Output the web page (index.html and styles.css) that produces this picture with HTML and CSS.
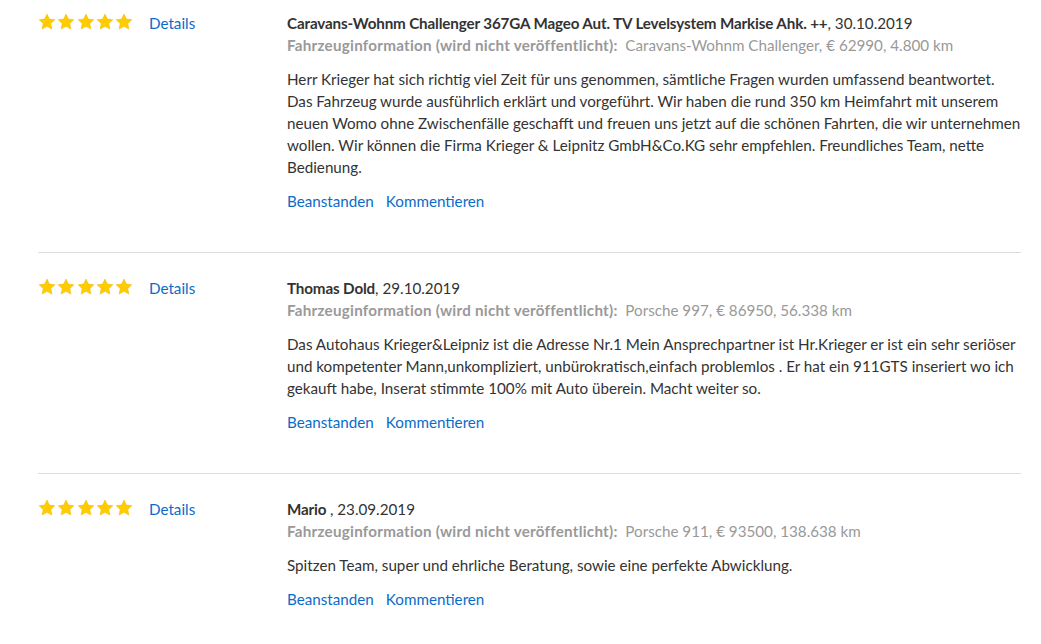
FILE: index.html
```html
<!DOCTYPE html>
<html lang="de">
<head>
    <meta charset="UTF-8">
    <title>Bewertungen</title>
    <link rel="stylesheet" href="styles.css">
</head>
<body>
    <div class="reviews">
        <div class="review">
            <div class="review-side">
                <div class="stars">
                    <svg viewBox="0 0 20 20"><path d="M10 1.2l2.6 5.6 6.1.7-4.5 4.2 1.2 6.1L10 14.8l-5.4 3 1.2-6.1L1.3 7.5l6.1-.7z"/></svg>
                    <svg viewBox="0 0 20 20"><path d="M10 1.2l2.6 5.6 6.1.7-4.5 4.2 1.2 6.1L10 14.8l-5.4 3 1.2-6.1L1.3 7.5l6.1-.7z"/></svg>
                    <svg viewBox="0 0 20 20"><path d="M10 1.2l2.6 5.6 6.1.7-4.5 4.2 1.2 6.1L10 14.8l-5.4 3 1.2-6.1L1.3 7.5l6.1-.7z"/></svg>
                    <svg viewBox="0 0 20 20"><path d="M10 1.2l2.6 5.6 6.1.7-4.5 4.2 1.2 6.1L10 14.8l-5.4 3 1.2-6.1L1.3 7.5l6.1-.7z"/></svg>
                    <svg viewBox="0 0 20 20"><path d="M10 1.2l2.6 5.6 6.1.7-4.5 4.2 1.2 6.1L10 14.8l-5.4 3 1.2-6.1L1.3 7.5l6.1-.7z"/></svg>
                </div>
                <a class="link" href="#">Details</a>
            </div>
            <div class="review-main">
                <div class="review-title"><strong>Caravans-Wohnm Challenger 367GA Mageo Aut. TV Levelsystem Markise Ahk. ++</strong>, 30.10.2019</div>
                <div class="review-info"><strong>Fahrzeuginformation (wird nicht veröffentlicht):</strong>&nbsp; Caravans-Wohnm Challenger, € 62990, 4.800 km</div>
                <p class="review-text">Herr Krieger hat sich richtig viel Zeit für uns genommen, sämtliche Fragen wurden umfassend beantwortet. Das Fahrzeug wurde ausführlich erklärt und vorgeführt. Wir haben die rund 350 km Heimfahrt mit unserem neuen Womo ohne Zwischenfälle geschafft und freuen uns jetzt auf die schönen Fahrten, die wir unternehmen wollen. Wir können die Firma Krieger &amp; Leipnitz GmbH&amp;Co.KG sehr empfehlen. Freundliches Team, nette Bedienung.</p>
                <div class="review-actions">
                    <a class="link" href="#">Beanstanden</a>
                    <a class="link" href="#">Kommentieren</a>
                </div>
            </div>
        </div>

        <div class="review">
            <div class="review-side">
                <div class="stars">
                    <svg viewBox="0 0 20 20"><path d="M10 1.2l2.6 5.6 6.1.7-4.5 4.2 1.2 6.1L10 14.8l-5.4 3 1.2-6.1L1.3 7.5l6.1-.7z"/></svg>
                    <svg viewBox="0 0 20 20"><path d="M10 1.2l2.6 5.6 6.1.7-4.5 4.2 1.2 6.1L10 14.8l-5.4 3 1.2-6.1L1.3 7.5l6.1-.7z"/></svg>
                    <svg viewBox="0 0 20 20"><path d="M10 1.2l2.6 5.6 6.1.7-4.5 4.2 1.2 6.1L10 14.8l-5.4 3 1.2-6.1L1.3 7.5l6.1-.7z"/></svg>
                    <svg viewBox="0 0 20 20"><path d="M10 1.2l2.6 5.6 6.1.7-4.5 4.2 1.2 6.1L10 14.8l-5.4 3 1.2-6.1L1.3 7.5l6.1-.7z"/></svg>
                    <svg viewBox="0 0 20 20"><path d="M10 1.2l2.6 5.6 6.1.7-4.5 4.2 1.2 6.1L10 14.8l-5.4 3 1.2-6.1L1.3 7.5l6.1-.7z"/></svg>
                </div>
                <a class="link" href="#">Details</a>
            </div>
            <div class="review-main">
                <div class="review-title"><strong>Thomas Dold</strong>, 29.10.2019</div>
                <div class="review-info"><strong>Fahrzeuginformation (wird nicht veröffentlicht):</strong>&nbsp; Porsche 997, € 86950, 56.338 km</div>
                <p class="review-text">Das Autohaus Krieger&amp;Leipniz ist die Adresse Nr.1 Mein Ansprechpartner ist Hr.Krieger er ist ein sehr seriöser und kompetenter Mann,unkompliziert, unbürokratisch,einfach problemlos . Er hat ein 911GTS inseriert wo ich gekauft habe, Inserat stimmte 100% mit Auto überein. Macht weiter so.</p>
                <div class="review-actions">
                    <a class="link" href="#">Beanstanden</a>
                    <a class="link" href="#">Kommentieren</a>
                </div>
            </div>
        </div>

        <div class="review">
            <div class="review-side">
                <div class="stars">
                    <svg viewBox="0 0 20 20"><path d="M10 1.2l2.6 5.6 6.1.7-4.5 4.2 1.2 6.1L10 14.8l-5.4 3 1.2-6.1L1.3 7.5l6.1-.7z"/></svg>
                    <svg viewBox="0 0 20 20"><path d="M10 1.2l2.6 5.6 6.1.7-4.5 4.2 1.2 6.1L10 14.8l-5.4 3 1.2-6.1L1.3 7.5l6.1-.7z"/></svg>
                    <svg viewBox="0 0 20 20"><path d="M10 1.2l2.6 5.6 6.1.7-4.5 4.2 1.2 6.1L10 14.8l-5.4 3 1.2-6.1L1.3 7.5l6.1-.7z"/></svg>
                    <svg viewBox="0 0 20 20"><path d="M10 1.2l2.6 5.6 6.1.7-4.5 4.2 1.2 6.1L10 14.8l-5.4 3 1.2-6.1L1.3 7.5l6.1-.7z"/></svg>
                    <svg viewBox="0 0 20 20"><path d="M10 1.2l2.6 5.6 6.1.7-4.5 4.2 1.2 6.1L10 14.8l-5.4 3 1.2-6.1L1.3 7.5l6.1-.7z"/></svg>
                </div>
                <a class="link" href="#">Details</a>
            </div>
            <div class="review-main">
                <div class="review-title"><strong>Mario </strong>, 23.09.2019</div>
                <div class="review-info"><strong>Fahrzeuginformation (wird nicht veröffentlicht):</strong>&nbsp; Porsche 911, € 93500, 138.638 km</div>
                <p class="review-text">Spitzen Team, super und ehrliche Beratung, sowie eine perfekte Abwicklung.</p>
                <div class="review-actions">
                    <a class="link" href="#">Beanstanden</a>
                    <a class="link" href="#">Kommentieren</a>
                </div>
            </div>
        </div>
    </div>
</body>
</html>
```

FILE: styles.css
```css
body {
    font-family: 'Source Sans Pro', Lato, 'Liberation Sans', sans-serif;
    font-size: 15.2px;
    line-height: 22px;
    color: #333;
    background: #fff;
    margin: 0;
    padding: 0 20px 0 38px;
}
.review {
    display: flex;
    padding: 24px 0 40px 0;
    border-bottom: 1px solid #ddd;
}
.review:first-child {
    padding-top: 12px;
}
.review:last-child {
    border-bottom: none;
}
.review-side {
    width: 249px;
    flex-shrink: 0;
    display: flex;
    align-items: flex-start;
    gap: 16px;
}
.stars {
    display: flex;
    gap: 1.25px;
    padding-top: 1px;
}
.stars svg {
    width: 18px;
    height: 18px;
    fill: #ffcc00;
    stroke: #f5b400;
    stroke-width: 0.6;
}
.review-main {
    flex: 1;
}
.review-title strong {
    font-weight: bold;
    letter-spacing: -0.14px;
}
.review-info {
    color: #999;
}
.review-info strong {
    letter-spacing: 0.25px;
}
.review-text {
    margin: 12px 0;
}
.review-actions {
    display: flex;
    gap: 12px;
}
.link {
    color: #0a6cc9;
    text-decoration: none;
}
```
